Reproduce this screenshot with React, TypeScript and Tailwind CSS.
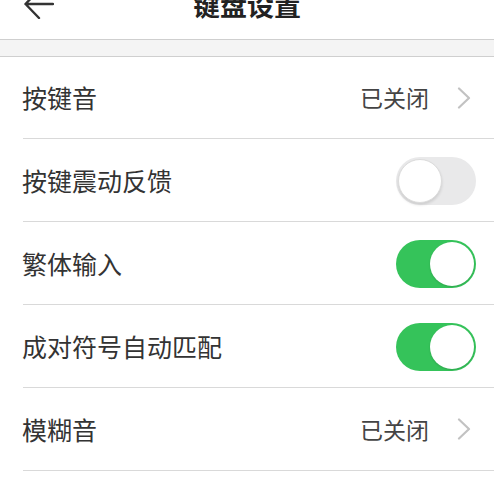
import React from "react";

const font = { fontFamily: '"Noto Sans CJK SC", "Noto Sans", sans-serif' };

function Toggle({ on }: { on: boolean }) {
  return on ? (
    <div className="w-[80px] h-[48px] rounded-full bg-[#35c35a] flex items-center justify-end px-[2px]">
      <div className="w-[44px] h-[44px] rounded-full bg-white shadow-[0_1px_2px_rgba(0,0,0,0.15)]" />
    </div>
  ) : (
    <div className="w-[80px] h-[48px] rounded-full bg-[#e9e9ea] flex items-center justify-start px-[2px]">
      <div className="w-[44px] h-[44px] rounded-full bg-white border border-[#dcdcdc] shadow-[0_2px_3px_rgba(0,0,0,0.12)]" />
    </div>
  );
}

function Chevron() {
  return (
    <svg width="14" height="22" viewBox="0 0 14 22" className="ml-[28px] mr-[23px]">
      <polyline points="2,1.5 12,11 2,20.5" fill="none" stroke="#c2c2c2" strokeWidth="2.2" strokeLinecap="round" strokeLinejoin="round" />
    </svg>
  );
}

type Row = { label: string; kind: "nav" | "on" | "off" };

const rows: Row[] = [
  { label: "按键音", kind: "nav" },
  { label: "按键震动反馈", kind: "off" },
  { label: "繁体输入", kind: "on" },
  { label: "成对符号自动匹配", kind: "on" },
  { label: "模糊音", kind: "nav" },
];

export default function App() {
  return (
    <div className="w-[497px] h-[482px] bg-white overflow-hidden" style={font}>
      <div className="w-[494px]">
        <div className="h-[39px] overflow-hidden">
          <div className="relative h-[50px] -mt-[21px] flex items-center justify-center">
            <svg width="30" height="30" viewBox="0 0 30 30" className="absolute left-[24px] top-[10px]">
              <path d="M1.5 15 H29 M15 1 L1.5 15 L15 29" fill="none" stroke="#333" strokeWidth="2.4" strokeLinecap="round" strokeLinejoin="round" />
            </svg>
            <span className="text-[27px] font-bold text-[#222] leading-none">键盘设置</span>
          </div>
        </div>
        <div className="h-[18px] bg-[#f4f4f4] border-t border-b border-[#cfcfcf]" />
        {rows.map((r, i) => (
          <div key={i} className="pl-[23px]">
            <div className={`${i === 0 ? "h-[82px]" : "h-[83px]"} border-b border-[#d9d9d9] flex items-center justify-between`}>
              <span className="-ml-[1px] text-[25px] text-[#333] leading-none">{r.label}</span>
              {r.kind === "nav" ? (
                <div className="flex items-center">
                  <span className="text-[23px] text-[#444] leading-none">已关闭</span>
                  <Chevron />
                </div>
              ) : (
                <div className="mr-[18px] mt-[2px]">
                  <Toggle on={r.kind === "on"} />
                </div>
              )}
            </div>
          </div>
        ))}
      </div>
    </div>
  );
}
